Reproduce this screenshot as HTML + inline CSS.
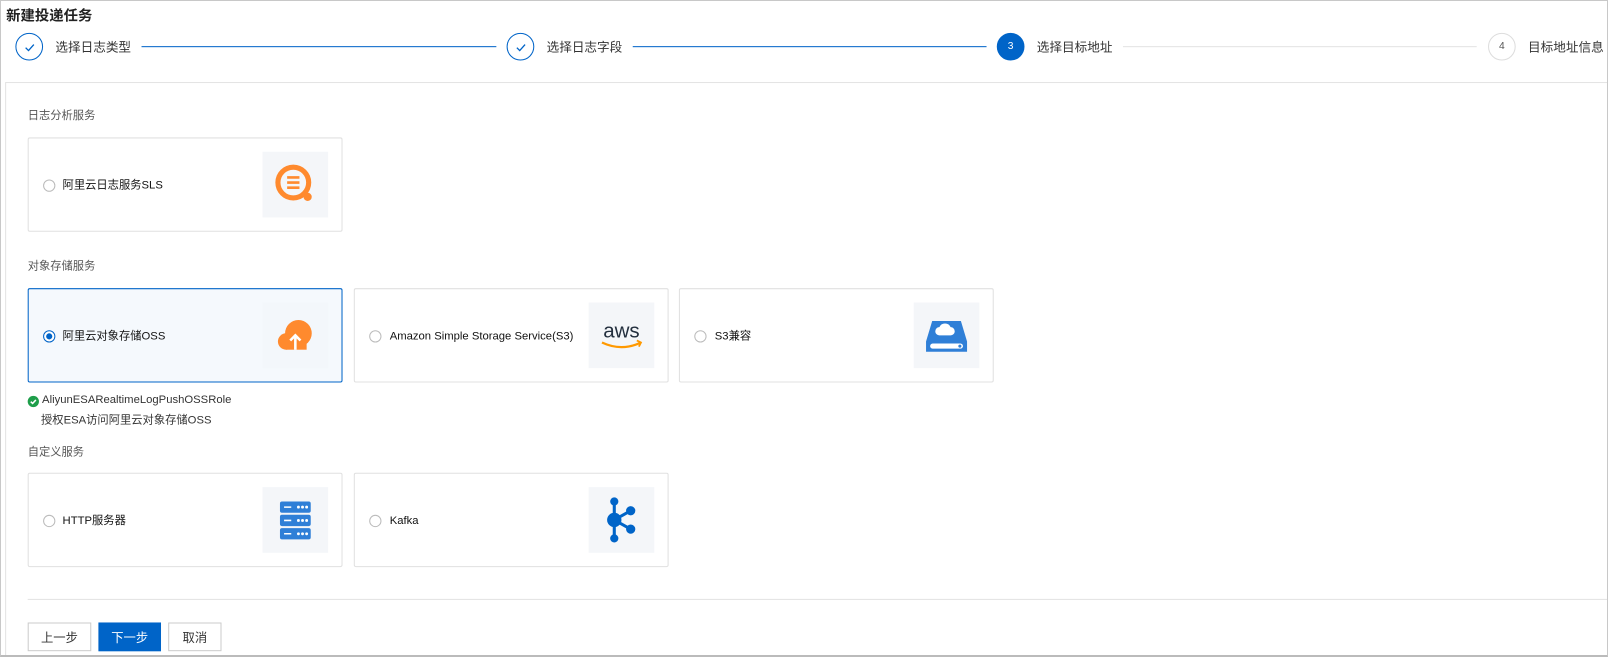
<!DOCTYPE html>
<html><head><meta charset="utf-8"><style>
*{box-sizing:border-box;margin:0;padding:0}
body{width:1608px;height:657px;overflow:hidden;background:#fff;font-family:"Liberation Sans","Noto Sans CJK SC",sans-serif;color:#333;position:relative;font-size:12px}
.frame{position:absolute;left:0;top:0;width:1608px;height:657px;border:1px solid #c8c8c8;border-bottom:2px solid #bbb;z-index:5;pointer-events:none}
.wrap{position:absolute;left:0;top:0;width:1568px;height:641px;transform:scale(1.02551);transform-origin:0 0;overflow:hidden}
.abs{position:absolute}
.title{left:6px;top:5px;font-size:14px;font-weight:bold;color:#222}
.circ{width:27px;height:27px;border-radius:50%;border:1px solid #0064c8;display:flex;align-items:center;justify-content:center;font-size:10px}
.slabel{font-size:12.3px;color:#333;top:38px;line-height:16px}
.line{height:1px;top:45px;background:#0064c8}
.panel{left:5px;top:80px;width:1610px;height:580px;border:1px solid #e3e3e3}
.sec{font-size:11px;color:#555}
.card{border:1px solid #e0e0e0;border-radius:2px;width:307px;height:92px;background:#fff}
.card.sel{border-color:#0064c8;background:#f5f9fd}
.radio{position:absolute;left:14px;top:40px;width:12px;height:12px;border-radius:50%;border:1px solid #bbb;background:#fff}
.sel .radio{border-color:#0064c8}
.sel .radio:after{content:"";position:absolute;left:2px;top:2px;width:6px;height:6px;border-radius:50%;background:#0064c8}
.clabel{position:absolute;left:33px;top:38px;font-size:11px;color:#111;line-height:16px}
.ib{position:absolute;left:228px;top:13px;width:64px;height:64px;background:#f4f6f9;display:flex;align-items:center;justify-content:center}
.btn{top:607px;height:28px;border:1px solid #ccc;font-size:12px;display:flex;align-items:center;justify-content:center;background:#fff}
</style></head><body>
<div class="frame"></div>
<div class="wrap">
<div class="abs title">新建投递任务</div>
<div class="abs circ" style="left:15px;top:32px"><svg width="12" height="12" viewBox="0 0 12 12"><path d="M2 6.5l2.8 2.8L10 3.5" fill="none" stroke="#0064c8" stroke-width="1.3"/></svg></div>
<div class="abs slabel" style="left:54px">选择日志类型</div>
<div class="abs line" style="left:138px;width:346px"></div>
<div class="abs circ" style="left:494px;top:32px"><svg width="12" height="12" viewBox="0 0 12 12"><path d="M2 6.5l2.8 2.8L10 3.5" fill="none" stroke="#0064c8" stroke-width="1.3"/></svg></div>
<div class="abs slabel" style="left:533px">选择日志字段</div>
<div class="abs line" style="left:617px;width:345px"></div>
<div class="abs circ" style="left:972px;top:32px;background:#0064c8;color:#fff">3</div>
<div class="abs slabel" style="left:1011px">选择目标地址</div>
<div class="abs line" style="left:1095px;width:345px;background:#e3e3e3"></div>
<div class="abs circ" style="left:1451px;top:32px;border-color:#ddd;color:#555">4</div>
<div class="abs slabel" style="left:1490px">目标地址信息</div>

<div class="abs panel"></div>
<div class="abs sec" style="left:27px;top:104px">日志分析服务</div>
<div class="abs card" style="left:27px;top:134px"><div class="radio"></div><div class="clabel">阿里云日志服务SLS</div>
<div class="ib"><svg width="44" height="44" viewBox="0 0 44 44"><circle cx="20" cy="20" r="15" fill="none" stroke="#ff8a2e" stroke-width="5"/><circle cx="34" cy="34" r="4" fill="#ff8a2e"/><path d="M14 15h12M14 20h12M14 25h12" stroke="#ff8a2e" stroke-width="2.5"/></svg></div></div>

<div class="abs sec" style="left:27px;top:251px">对象存储服务</div>
<div class="abs card sel" style="left:27px;top:281px"><div class="radio"></div><div class="clabel">阿里云对象存储OSS</div>
<div class="ib" style="background:#f3f7fb"><svg width="44" height="44" viewBox="0 0 44 44"><circle cx="25" cy="20" r="13" fill="#ff8a2e"/><circle cx="13" cy="28" r="8" fill="#ff8a2e"/><rect x="13" y="20" width="20" height="16" fill="#ff8a2e"/><path d="M22 36V22M17 27l5-5 5 5" fill="none" stroke="#fff" stroke-width="2.5"/></svg></div></div>
<div class="abs card" style="left:345px;top:281px"><div class="radio"></div><div class="clabel" style="left:34px">Amazon Simple Storage Service(S3)</div>
<div class="ib"><svg width="50" height="40" viewBox="0 0 50 40"><text x="25" y="22" text-anchor="middle" font-family="Liberation Sans" font-size="20" fill="#232f3e">aws</text><path d="M6 27q19 9 38 0" fill="none" stroke="#f90" stroke-width="2.2"/><path d="M40 25l4 2-2 4" fill="none" stroke="#f90" stroke-width="1.8"/></svg></div></div>
<div class="abs card" style="left:662px;top:281px"><div class="radio"></div><div class="clabel" style="left:34px">S3兼容</div>
<div class="ib"><svg width="44" height="40" viewBox="0 0 44 40"><path d="M8 6h28l6 20v10H2V26z" fill="#2f7fd7"/><rect x="6" y="28" width="32" height="5" rx="2.5" fill="#fff"/><path d="M15 20a4 4 0 010-8 6 6 0 0111 0 4 4 0 010 8z" fill="#fff"/><circle cx="35" cy="30.5" r="1.5" fill="#2f7fd7"/></svg></div></div>
<div class="abs" style="left:27px;top:386px;width:11px;height:11px;border-radius:50%;background:#1e9e4a"><svg width="11" height="11" viewBox="0 0 11 11" style="display:block"><path d="M3 5.7l1.8 1.7L8 4" fill="none" stroke="#fff" stroke-width="1.5"/></svg></div>
<div class="abs" style="left:41px;top:384px;font-size:11px;color:#333">AliyunESARealtimeLogPushOSSRole</div>
<div class="abs" style="left:40px;top:401px;font-size:11px;color:#333">授权ESA访问阿里云对象存储OSS</div>

<div class="abs sec" style="left:27px;top:432px">自定义服务</div>
<div class="abs card" style="left:27px;top:461px"><div class="radio"></div><div class="clabel">HTTP服务器</div>
<div class="ib"><svg width="32" height="40" viewBox="0 0 32 40"><g fill="#2f7fd7"><rect x="1" y="2" width="30" height="11" rx="2"/><rect x="1" y="15" width="30" height="11" rx="2"/><rect x="1" y="28" width="30" height="11" rx="2"/></g><g stroke="#fff" stroke-width="1.5"><path d="M5 7.5h7M5 20.5h7M5 33.5h7"/></g><g fill="#fff"><circle cx="19" cy="7.5" r="1.4"/><circle cx="23" cy="7.5" r="1.4"/><circle cx="27" cy="7.5" r="1.4"/><circle cx="19" cy="20.5" r="1.4"/><circle cx="23" cy="20.5" r="1.4"/><circle cx="27" cy="20.5" r="1.4"/><circle cx="19" cy="33.5" r="1.4"/><circle cx="23" cy="33.5" r="1.4"/><circle cx="27" cy="33.5" r="1.4"/></g></svg></div></div>
<div class="abs card" style="left:345px;top:461px"><div class="radio"></div><div class="clabel" style="left:34px">Kafka</div>
<div class="ib"><svg width="30" height="46" viewBox="0 0 30 46"><g stroke="#0064c8" stroke-width="3"><path d="M8 5v36M8 23L24 14M8 23l16 9"/></g><g fill="#0064c8"><circle cx="8" cy="5" r="4"/><circle cx="8" cy="41" r="4"/><circle cx="8" cy="23" r="7"/><circle cx="24" cy="14" r="4.5"/><circle cx="24" cy="32" r="4.5"/></g></svg></div></div>

<div class="abs" style="left:27px;top:584px;width:1590px;height:1px;background:#e3e3e3"></div>
<div class="abs btn" style="left:27px;width:62px">上一步</div>
<div class="abs btn" style="left:96px;width:61px;background:#0064c8;border-color:#0064c8;color:#fff">下一步</div>
<div class="abs btn" style="left:164px;width:52px">取消</div>
</div>
</body></html>
